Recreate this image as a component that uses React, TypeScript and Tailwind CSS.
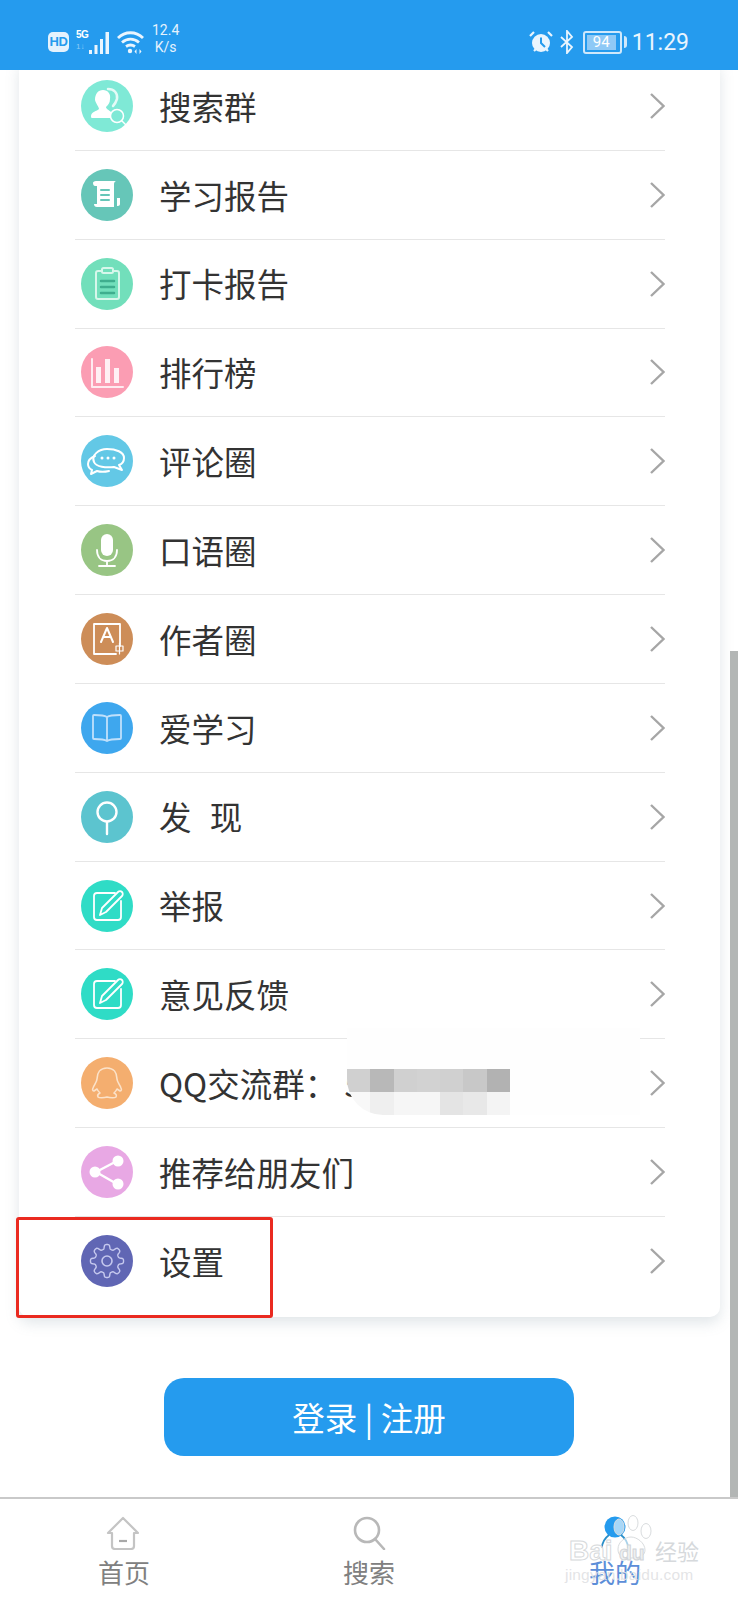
import type { ReactNode } from "react";

const CJK = "font-['Noto_Sans_CJK_SC','Noto_Sans',sans-serif]";

function Svg({ children }: { children: ReactNode }) {
  return (
    <svg viewBox="0 0 52 52" className="h-full w-full" fill="none" stroke="#fff" strokeWidth="2" strokeLinecap="round" strokeLinejoin="round">
      {children}
    </svg>
  );
}

// wavy outline for the settings cog, 8 teeth
function gearPath() {
  const pts: string[] = [];
  for (let i = 0; i < 160; i++) {
    const a = (i / 160) * Math.PI * 2;
    const r = 14.3 + 2.3 * Math.tanh(2.2 * Math.cos(8 * a));
    pts.push(`${(26 + r * Math.sin(a)).toFixed(2)} ${(26 - r * Math.cos(a)).toFixed(2)}`);
  }
  return `M${pts.join("L")}Z`;
}

const ICONS: Record<string, ReactNode> = {
  group: (
    <Svg>
      <path d="M27 9c6 0 10 4 9 10-1 3-2 5-4 7" opacity="0.8" strokeWidth="2.500" />
      <path fill="#fff" stroke="none" d="M22 10c5 0 8 4 7 9 0 4-2 6-4 8 0 2 3 3 5 5v6H11c-1 0-1-1-1-2 0-4 6-5 8-7 0-2-3-5-4-9 0-6 3-10 8-10z" />
      <circle cx="36" cy="36" r="6.500" fill="#7fe9d6" strokeWidth="1.500" />
      <path d="M41 41l4 4" strokeWidth="1.500" />
    </Svg>
  ),
  scroll: (
    <Svg>
      <path fill="#fff" stroke="none" d="M12 14c0-1 1-2 3-2h20c-2 1-2 2-2 4v22H16c-2 0-3-1-3-3h3V17h-2c-1 0-2-1-2-3zM36 29h3v6c0 1-1 2-2 2h-1z" />
      <path d="M20 21h8M20 26h8M20 31h8" stroke="#66c6b8" strokeWidth="2" />
    </Svg>
  ),
  clipboard: (
    <Svg>
      <rect x="15" y="13" width="23" height="28" rx="2" stroke="#d7f7eb" />
      <rect x="21" y="10" width="11" height="5" rx="1.500" fill="#72dfbb" stroke="#d7f7eb" />
      <path d="M20 23h13M20 29h13M20 35h13" stroke="#3fae8e" strokeWidth="2.500" />
    </Svg>
  ),
  chart: (
    <Svg>
      <path d="M11 13v28h31" opacity="0.8" />
      <rect x="15" y="21" width="5" height="16" fill="#fff" stroke="none" opacity="0.85" />
      <rect x="24" y="13" width="5" height="24" fill="#fff" stroke="none" opacity="0.85" />
      <rect x="33" y="22" width="5" height="15" fill="#fff" stroke="none" opacity="0.85" />
    </Svg>
  ),
  comment: (
    <Svg>
      <path d="M14 21c-5 2-7 5-7 8 0 3 2 5 4 6l-1 4 6-3c3 1 8 1 12 0" />
      <path d="M26 14c9 0 17 3 17 9 0 3-2 6-5 7l3 5-8-3c-8 1-18 0-20-5-3-7 5-13 13-13z" />
      <circle cx="21" cy="23" r="1.500" fill="#fff" stroke="none" />
      <circle cx="27" cy="23" r="1.500" fill="#fff" stroke="none" />
      <circle cx="33" cy="23" r="1.500" fill="#fff" stroke="none" />
    </Svg>
  ),
  mic: (
    <Svg>
      <rect x="20" y="10" width="12" height="22" rx="6" fill="#fff" stroke="none" />
      <path d="M16 26c0 7 4 11 10 11s10-4 10-11M26 37v5M18 42h16" strokeWidth="1.800" />
    </Svg>
  ),
  author: (
    <Svg>
      <path d="M35 41H13V11h26v22" strokeWidth="1.800" />
      <path d="M20 29l6-14 6 14M22 24h8" />
      <rect x="35" y="33" width="7" height="5" strokeWidth="1.200" />
      <path d="M38.500 30v11" strokeWidth="1.200" />
    </Svg>
  ),
  book: (
    <Svg>
      <path d="M26 15c-3-2-8-2-13-2-1 0-1 1-1 1v22c0 1 0 1 1 1 5 0 10 0 13 2 3-2 8-2 13-2 1 0 1 0 1-1V14s0-1-1-1c-5 0-10 0-13 2zM26 15v23" stroke="#bfe0fb" strokeWidth="1.800" />
    </Svg>
  ),
  find: (
    <Svg>
      <circle cx="26" cy="21" r="9.500" strokeWidth="2.400" />
      <path d="M26 31v12" strokeWidth="2.400" />
    </Svg>
  ),
  edit: (
    <Svg>
      <path d="M34 13H16c-2 0-3 1-3 3v21c0 2 1 3 3 3h21c2 0 3-1 3-3V21" strokeWidth="1.800" />
      <path fill="#2fdcc6" d="M19 35l2-7 16-16c1-1 3-1 4 0s1 3 0 4L25 32z" strokeWidth="1.800" />
    </Svg>
  ),
  qq: (
    <Svg>
      <path d="M26 11c-7 0-10 5-10 11 0 3-3 6-4 9-1 2 0 3 1 3l3-2c1 2 2 3 3 4-2 1-3 2-2 4 1 1 6 1 9 0 3 1 8 1 9 0 1-2 0-3-2-4 1-1 2-2 3-4l3 2c1 0 2-1 1-3-1-3-4-6-4-9 0-6-3-11-10-11z" stroke="#fbe2c9" strokeWidth="1.600" />
    </Svg>
  ),
  share: (
    <Svg>
      <path d="M36 15L15 26l21 12" strokeWidth="2.400" />
      <circle cx="37" cy="15" r="5.500" fill="#fff" stroke="none" />
      <circle cx="14" cy="26" r="5.500" fill="#fff" stroke="none" />
      <circle cx="37" cy="38" r="5.500" fill="#fff" stroke="none" />
    </Svg>
  ),
  gear: (
    <Svg>
      <path stroke="#c5c8ee" strokeWidth="1.400" d={gearPath()} />
      <circle cx="26" cy="26" r="5" stroke="#c5c8ee" strokeWidth="1.600" />
    </Svg>
  ),
};

const ROWS = [
  { label: "搜索群", color: "bg-[#7fe9d6]", icon: "group" },
  { label: "学习报告", color: "bg-[#66c6b8]", icon: "scroll" },
  { label: "打卡报告", color: "bg-[#72dfbb]", icon: "clipboard" },
  { label: "排行榜", color: "bg-[#fb9db3]", icon: "chart" },
  { label: "评论圈", color: "bg-[#63c8e6]", icon: "comment" },
  { label: "口语圈", color: "bg-[#98c584]", icon: "mic" },
  { label: "作者圈", color: "bg-[#cd8d58]", icon: "author" },
  { label: "爱学习", color: "bg-[#3ea7ee]", icon: "book" },
  { label: "发\u2002\u200a现", color: "bg-[#5cc4cf]", icon: "find" },
  { label: "举报", color: "bg-[#2fdcc6]", icon: "edit" },
  { label: "意见反馈", color: "bg-[#2fdcc6]", icon: "edit" },
  { label: "QQ交流群： 5", color: "bg-[#f4ae6f]", icon: "qq" },
  { label: "推荐给朋友们", color: "bg-[#e8a8e4]", icon: "share" },
  { label: "设置", color: "bg-[#6066b4]", icon: "gear" },
];

const MOSAIC = [
  ["bg-[#d0d0d0]", "bg-[#b8b8b8]", "bg-[#d0d0d0]", "bg-[#d2d2d2]", "bg-[#d0d0d0]", "bg-[#c8c8c8]", "bg-[#b2b2b2]"],
  ["bg-[#f8f8f8]", "bg-[#efefef]", "bg-[#f6f6f6]", "bg-[#f6f6f6]", "bg-[#e4e4e4]", "bg-[#e8e8e8]", "bg-[#f4f4f4]"],
];

function Row({ label, color, icon, last }: { label: string; color: string; icon: string; last: boolean }) {
  return (
    <div className={`flex h-[88.85px] items-center pl-[6px] ${last ? "" : "border-b border-[#e6e6e6]"}`}>
      <div className={`h-[52px] w-[52px] shrink-0 rounded-full ${color}`}>{ICONS[icon]}</div>
      <span className="ml-[26.500px] flex-1 whitespace-pre text-[32.500px] leading-none text-[#333]">{label}</span>
      <svg viewBox="0 0 16 28" className="h-[28px] w-[16px]" fill="none" stroke="#a6a6a6" strokeWidth="2.400">
        <path d="M2 2l12.500 12L2 26" />
      </svg>
    </div>
  );
}

function StatusBar() {
  return (
    <div className="relative z-20 flex h-[70px] shrink-0 items-center justify-between bg-[#259bee] pl-[48px] pr-[49px] pt-[14px] text-white">
      <div className="flex items-center">
        <div className="flex h-[20px] w-[21px] items-center justify-center rounded-[5px] bg-[#e4f2fd] font-['Liberation_Sans',sans-serif] text-[13px] font-bold tracking-[-0.5px] text-[#259bee]">HD</div>
        <div className="ml-[7px] flex h-[24px] w-[12px] flex-col font-['Liberation_Sans',sans-serif] leading-none">
          <span className="text-[10px] font-bold tracking-[-0.5px]">5G</span>
          <span className="mt-[3px] text-[8px] text-[#8ecbf6]">1↓</span>
        </div>
        <svg viewBox="0 0 24 24" className="h-[24px] w-[24px]" fill="#eaf5fe">
          <rect x="1" y="20" width="3" height="4" />
          <rect x="6.500" y="15" width="3" height="9" />
          <rect x="12" y="9" width="3" height="15" />
          <rect x="17.500" y="2" width="3.500" height="22" />
        </svg>
        <svg viewBox="0 0 27 24" className="ml-[5px] h-[24px] w-[27px]" fill="none" stroke="#eaf5fe" strokeWidth="2.800">
          <path d="M1 8c7-7 18-7 25 0M5 12.500c5-4.500 12-4.500 17 0M9 16.500c3-2 6-2 9 0" />
          <circle cx="13" cy="21" r="2.200" fill="#eaf5fe" stroke="none" />
          <path d="M19.500 19l-2 2.500 2 2.500zM22.500 19l2 2.500-2 2.500z" fill="#eaf5fe" stroke="none" />
        </svg>
        <div className="ml-[8px] mt-[-6px] flex flex-col items-center font-['Roboto',sans-serif] text-[14px] leading-[17px] text-[#e4f2fd]">
          <span>12.4</span>
          <span>K/s</span>
        </div>
      </div>
      <div className="flex items-center">
        <svg viewBox="0 0 24 24" className="h-[24px] w-[24px]">
          <circle cx="12" cy="13" r="9" fill="#eaf5fe" />
          <path d="M12 7.500V13l4 4" fill="none" stroke="#259bee" strokeWidth="2" />
          <path d="M1 6l4-4M23 6l-4-4" stroke="#eaf5fe" strokeWidth="2.200" />
          <path d="M5 21l2-2M19 21l-2-2" stroke="#eaf5fe" strokeWidth="2.200" />
        </svg>
        <svg viewBox="0 0 14 24" className="ml-[7px] h-[24px] w-[14px]" fill="none" stroke="#eaf5fe" strokeWidth="1.800">
          <path d="M1 7l11 10-5 6V1l5 6L1 17" />
        </svg>
        <div className="ml-[9px] flex h-[23px] w-[39px] items-center rounded-[3px] border-2 border-[#cfe8fb] pl-[2px]">
          <div className="flex h-[15px] w-[29px] items-center justify-center bg-[#8ec9f6] font-['Roboto',sans-serif] text-[15px] leading-none text-white">94</div>
        </div>
        <div className="ml-[2px] h-[12px] w-[3px] rounded-r-sm bg-[#cfe8fb]" />
        <span className="ml-[5px] font-['Roboto',sans-serif] text-[23px] leading-none text-[#eaf5fe]">11:29</span>
      </div>
    </div>
  );
}

function BottomNav() {
  return (
    <div className="relative grid h-[103px] shrink-0 grid-cols-3 border-t-2 border-[#c9c9c9] bg-white text-[26px] leading-none">
      <div className="flex flex-col items-center pt-[17px] text-[#808080]">
        <svg viewBox="0 0 34 34" className="h-[34px] w-[34px]" fill="none" stroke="#c4c4c4" strokeWidth="2.200" strokeLinejoin="round">
          <path d="M17 2L2 17h4v13c0 2 1 3 3 3h16c2 0 3-1 3-3V17h4z" />
          <path d="M13 25h8" stroke="#a8a8a8" />
        </svg>
        <span className="ml-[2px] mt-[9px]">首页</span>
      </div>
      <div className="flex flex-col items-center pt-[17px] text-[#808080]">
        <svg viewBox="0 0 34 34" className="h-[34px] w-[34px]" fill="none" stroke="#b8b8b8" strokeWidth="2.600">
          <circle cx="15" cy="14" r="12" />
          <path d="M23 23l9 10" strokeLinecap="round" />
        </svg>
        <span className="mt-[9px]">搜索</span>
      </div>
      <div className="flex flex-col items-center pt-[17px] text-[#5c8ed8]">
        <svg viewBox="0 0 34 34" className="h-[34px] w-[34px]" fill="none" stroke="#2a8fc9" strokeWidth="1.800">
          <circle cx="17" cy="11" r="10.500" fill="#259bee" stroke="none" />
          <path d="M4 32c0-5 3-10 7-13M30 32c0-5-3-10-7-13" />
        </svg>
        <span className="mt-[9px]">我的</span>
      </div>
      <Watermark />
    </div>
  );
}

function Watermark() {
  return (
    <div className="absolute left-[565px] top-[16px] h-[70px] w-[136px] font-['Liberation_Sans',sans-serif] text-white/70">
      <svg viewBox="0 0 44 46" className="absolute left-[45px] top-0 h-[46px] w-[44px]" fill="#ffffff" fillOpacity="0.6" stroke="#d9dcde" strokeWidth="1">
        <ellipse cx="9" cy="12" rx="5" ry="8" />
        <ellipse cx="23" cy="8" rx="5" ry="7.500" />
        <ellipse cx="36" cy="16" rx="5" ry="7.500" />
        <path d="M8 34c0-7 7-12 13-12s14 6 14 13c0 5-4 8-14 8S8 40 8 34z" />
      </svg>
      <span className="absolute left-[4px] top-[22px] text-[28px] font-bold leading-none [-webkit-text-stroke:1px_#d6d9db]">Bai</span>
      <span className="absolute left-[54px] top-[27px] text-[21px] font-bold leading-none text-[#eef0f1] [-webkit-text-stroke:1px_#d2d5d8]">du</span>
      <span className={`absolute left-[90px] top-[24px] text-[22px] leading-none text-[#d6d9dc] ${CJK}`}>经验</span>
      <span className="absolute left-0 top-[52px] text-[15.500px] leading-none tracking-[0.2px] text-[#dfe1e3]/90">jingyan.baidu.com</span>
    </div>
  );
}

export default function App() {
  return (
    <div className={`relative flex h-[1600px] w-[738px] flex-col overflow-hidden bg-white ${CJK}`}>
      <StatusBar />
      <div className="relative flex-1 overflow-hidden">
        <div className="mx-[18.500px] -mt-[8px] w-[701px] rounded-b-[10px] bg-white pb-[11.500px] pl-[56px] pr-[54.500px] shadow-[0_6px_14px_rgba(120,140,155,0.22)]">
          {ROWS.map((row, i) => (
            <Row key={row.label} {...row} last={i === ROWS.length - 1} />
          ))}
        </div>

        <div className="mt-[61px] flex justify-center">
          <button type="button" className="flex h-[78px] w-[410px] items-center justify-center whitespace-pre rounded-[20px] bg-[#259bee] text-[32.500px] leading-none text-white">
            登录 | 注册
          </button>
        </div>

        {/* pixelated cover over the group number */}
        <div className="absolute left-[347px] top-[958px] h-[87px] w-[293px] overflow-hidden rounded-bl-[36px] bg-[#fefefe]">
          <div className="absolute left-0 top-[41px] grid w-[163px] grid-cols-7">
            {MOSAIC.flat().map((c, i) => (
              <div key={i} className={`h-[23px] ${c}`} />
            ))}
          </div>
        </div>

        {/* red highlight drawn over the settings row */}
        <div className="absolute left-[16px] top-[1147px] h-[101px] w-[257px] rounded-[3px] border-[3px] border-[#ea2a20]" />

        {/* scrollbar */}
        <div className="absolute bottom-0 right-0 top-[581px] w-[8px] bg-[#b3b6b5]" />
      </div>
      <BottomNav />
    </div>
  );
}
